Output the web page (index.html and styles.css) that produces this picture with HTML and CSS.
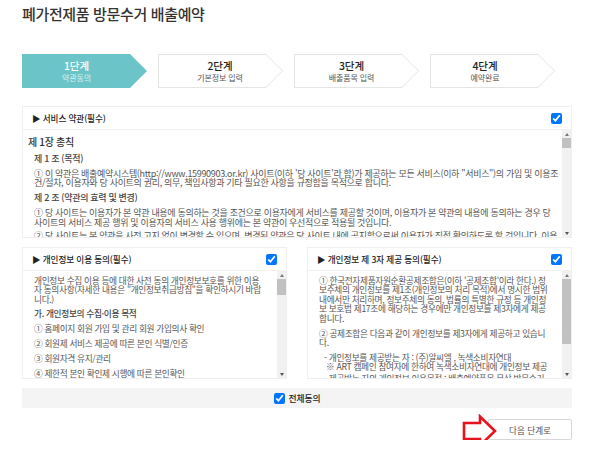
FILE: index.html
```html
<!DOCTYPE html>
<html lang="ko">
<head>
  <meta charset="UTF-8" />
  <title>폐가전제품 방문수거 배출예약</title>
  <link rel="stylesheet" href="styles.css">
</head>
<body>
  <div id="wrap">
    <h1 class="page-title">폐가전제품 방문수거 배출예약</h1>

    <ul class="steps">
      <li class="step active"><div class="step-in"><b>1단계</b><span>약관동의</span></div></li>
      <li class="step"><div class="step-in"><b>2단계</b><span>기본정보 입력</span></div></li>
      <li class="step"><div class="step-in"><b>3단계</b><span>배출품목 입력</span></div></li>
      <li class="step"><div class="step-in"><b>4단계</b><span>예약완료</span></div></li>
    </ul>

    <section class="panel panel-wide">
      <div class="panel-head">
        <h2>▶ 서비스 약관(필수)</h2>
        <input type="checkbox" checked>
      </div>
      <div class="panel-body">
        <div class="terms">
          <h3>제 1장 총칙</h3>
          <h4>제 1 조 (목적)</h4>
          <p>① 이 약관은 배출예약시스템(http://www.15990903.or.kr) 사이트(이하 '당 사이트'라 함)가 제공하는 모든 서비스(이하 "서비스")의 가입 및 이용조건/절차, 이용자와 당 사이트의 권리, 의무, 책임사항과 기타 필요한 사항을 규정함을 목적으로 합니다.</p>
          <h4>제 2 조 (약관의 효력 및 변경)</h4>
          <p>① 당 사이트는 이용자가 본 약관 내용에 동의하는 것을 조건으로 이용자에게 서비스를 제공할 것이며, 이용자가 본 약관의 내용에 동의하는 경우 당 사이트의 서비스 제공 행위 및 이용자의 서비스 사용 행위에는 본 약관이 우선적으로 적용될 것입니다.</p>
          <p>② 당 사이트는 본 약관을 사전 고지 없이 변경할 수 있으며, 변경된 약관은 당 사이트 내에 공지함으로써 이용자가 직접 확인하도록 할 것입니다. 이용자가 변경된 약관에 동의하지 않는 경우</p>
        </div>
        <div class="scrollbar">
          <i class="up"></i><div class="track"><div class="thumb thumb-a"></div></div><i class="down"></i>
        </div>
      </div>
    </section>

    <div class="panel-row">
      <section class="panel">
        <div class="panel-head">
          <h2>▶ 개인정보 이용 동의(필수)</h2>
          <input type="checkbox" checked>
        </div>
        <div class="panel-body">
          <div class="terms terms-narrow">
            <p>개인정보 수집 이용 등에 대한 사전 동의 개인정보보호를 위한 이용자 동의사항(자세한 내용은 "개인정보취급방침"을 확인하시기 바랍니다.)</p>
            <h4>가. 개인정보의 수집·이용 목적</h4>
            <p>① 홈페이지 회원 가입 및 관리 회원 가입의사 확인</p>
            <p>② 회원제 서비스 제공에 따른 본인 식별/인증</p>
            <p>③ 회원자격 유지/관리</p>
            <p>④ 제한적 본인 확인제 시행에 따른 본인확인</p>
          </div>
          <div class="scrollbar">
            <i class="up"></i><div class="track"><div class="thumb thumb-b"></div></div><i class="down"></i>
          </div>
        </div>
      </section>

      <section class="panel">
        <div class="panel-head">
          <h2>▶ 개인정보 제 3자 제공 동의(필수)</h2>
          <input type="checkbox" checked>
        </div>
        <div class="panel-body">
          <div class="terms">
            <p>① 한국전자제품자원순환공제조합은(이하 '공제조합'이라 한다.) 정보주체의 개인정보를 제1조(개인정보의 처리 목적)에서 명시한 범위 내에서만 처리하며, 정보주체의 동의, 법률의 특별한 규정 등 개인정보 보호법 제17조에 해당하는 경우에만 개인정보를 제3자에게 제공합니다.</p>
            <p>② 공제조합은 다음과 같이 개인정보를 제3자에게 제공하고 있습니다.</p>
            <div class="sub">
              - 개인정보를 제공받는 자 : (주)알씨엘 , 녹색소비자연대<br>
              &nbsp;※ ART 캠페인 참여자에 한하여 녹색소비자연대에 개인정보 제공
            </div>
            <div class="sub sub-next">- 제공받는 자의 개인정보 이용목적 : 배출예약품목 무상 방문수거</div>
          </div>
          <div class="scrollbar">
            <i class="up"></i><div class="track"><div class="thumb thumb-c"></div></div><i class="down"></i>
          </div>
        </div>
      </section>
    </div>

    <label class="agree-all"><input type="checkbox" checked> 전체동의</label>

    <div class="actions">
      <div class="next-wrap">
        <button class="next-btn">다음 단계로</button>
        <svg class="red-arrow" width="36" height="34" viewBox="0 0 36 34">
          <path d="M2 9H18V2.5L33 17 18 31.5V25H2Z" fill="#fff" stroke="#e8121c" stroke-width="2.6"/>
        </svg>
      </div>
    </div>
  </div>
</body>
</html>
```

FILE: styles.css
```css
* {
  box-sizing: border-box;
}

body {
  margin: 0;
  background-color: #ffffff;
  color: #555555;
  font-family: "Noto Sans CJK KR", "Noto Sans", sans-serif;
  font-size: 9px;
  letter-spacing: -0.32px;
  overflow: hidden;
}

#wrap {
  width: 550px;
  margin-left: 22px;
}

.page-title {
  margin: 0;
  padding-top: 3px;
  height: 54px;
  font-size: 15px;
  letter-spacing: -0.35px;
  line-height: 22px;
  font-weight: 500;
  color: #333333;
}

/* steps */
.steps {
  list-style: none;
  margin: 0;
  padding: 0;
  display: flex;
  gap: 11px;
}

.step {
  width: 125px;
  height: 34px;
  padding: 1px;
  background-color: #e4e4e4;
  clip-path: polygon(0 0, 108px 0, 100% 50%, 108px 100%, 0 100%);
}

.step-in {
  height: 100%;
  background-color: #ffffff;
  clip-path: polygon(0 0, 107px 0, 100% 50%, 107px 100%, 0 100%);
  display: flex;
  flex-direction: column;
  align-items: center;
  justify-content: center;
  color: #555555;
  font-size: 8px;
  letter-spacing: -0.1px;
  line-height: 11px;
}

.step:nth-child(1) .step-in { padding-right: 16px; }
.step:nth-child(2) .step-in { padding-right: 1px; }
.step:nth-child(3) .step-in { padding-right: 10px; }
.step:nth-child(4) .step-in { padding-right: 15px; }

.step-in b {
  font-size: 10.5px;
  line-height: 13px;
  font-weight: 500;
  color: #222222;
}

.step.active,
.step.active .step-in {
  background-color: #6bc4c8;
}

.step.active b,
.step.active span {
  color: #ffffff;
}

.step.active span {
  opacity: 0.75;
}

/* panels */
.panel {
  height: 132px;
  border: 1px solid #efefef;
  display: flex;
  flex-direction: column;
}

.panel-wide {
  margin-top: 18px;
}

.panel-row {
  display: flex;
  justify-content: space-between;
  margin-top: 9px;
}

.panel-row .panel {
  width: 265px;
}

.panel-head {
  flex: none;
  height: 23px;
  padding: 0 9px 0 9px;
  border-bottom: 1px solid #f2f2f2;
  display: flex;
  align-items: center;
  justify-content: space-between;
}

.panel-head h2 {
  margin: 0;
  font-size: 8.6px;
  letter-spacing: -0.1px;
  font-weight: 500;
  color: #222222;
}

.panel-head input {
  width: 11px;
  height: 11px;
  margin: 0;
}

.panel-body {
  flex: 1;
  min-height: 0;
  display: flex;
}

.terms {
  flex: 1;
  min-width: 0;
  overflow: hidden;
  padding: 4px 3px 0 5px;
  word-break: break-all;
  line-height: 9.4px;
}

.terms h3 {
  margin: 0 0 3px;
  font-size: 10px;
  line-height: 15px;
  font-weight: 500;
  color: #333333;
}

.terms h4 {
  margin: 0 0 3px 6px;
  font-size: 9px;
  line-height: 14px;
  font-weight: 500;
  color: #444444;
}

.terms p {
  margin: 0 0 3.5px 6px;
}

.panel-row .terms {
  padding: 5px 9px 0 5px;
  font-size: 8.7px;
  letter-spacing: -0.35px;
}

.panel-row .terms-narrow {
  padding-right: 12px;
}

.panel-row .terms p {
  margin-bottom: 5.5px;
}

.panel-row .terms h4 {
  margin-top: -2.5px;
  font-size: 8.7px;
}

.sub {
  margin: 0 0 0 11px;
  white-space: nowrap;
}

.sub-next {
  margin-top: 2px;
}

/* fake scrollbar, the thumb spots are copied from the picture */
.scrollbar {
  flex: none;
  width: 9px;
  background-color: #f1f1f1;
  display: flex;
  flex-direction: column;
  align-items: center;
}

.scrollbar i {
  flex: none;
  height: 8px;
  display: flex;
  align-items: center;
}

.scrollbar i::before {
  content: "";
  border-left: 2.5px solid transparent;
  border-right: 2.5px solid transparent;
}

.up::before {
  border-bottom: 3px solid #777777;
}

.down::before {
  border-top: 3px solid #555555;
}

.track {
  flex: 1;
  width: 100%;
}

.thumb {
  background-color: #c1c1c1;
}

.thumb-a {
  height: 10px;
}

.thumb-b {
  height: 16px;
}

.thumb-c {
  height: 65px;
}

/* bottom */
.agree-all {
  margin-top: 9px;
  height: 20px;
  background-color: #f4f4f4;
  display: flex;
  align-items: center;
  justify-content: center;
  gap: 2px;
  font-size: 8.8px;
  letter-spacing: -0.1px;
  font-weight: 500;
  color: #222222;
}

.agree-all input {
  width: 11px;
  height: 11px;
  margin: 0 2px 0 0;
}

.actions {
  display: flex;
  justify-content: flex-end;
  margin-top: 11px;
}

.next-wrap {
  position: relative;
}

.next-btn {
  display: block;
  width: 84px;
  height: 21px;
  padding: 0;
  background-color: #ffffff;
  border: 1px solid #d8d8d8;
  border-radius: 2px;
  font-family: inherit;
  font-size: 8.6px;
  color: #555555;
}

.red-arrow {
  position: absolute;
  left: -26px;
  top: -5px;
}
```
